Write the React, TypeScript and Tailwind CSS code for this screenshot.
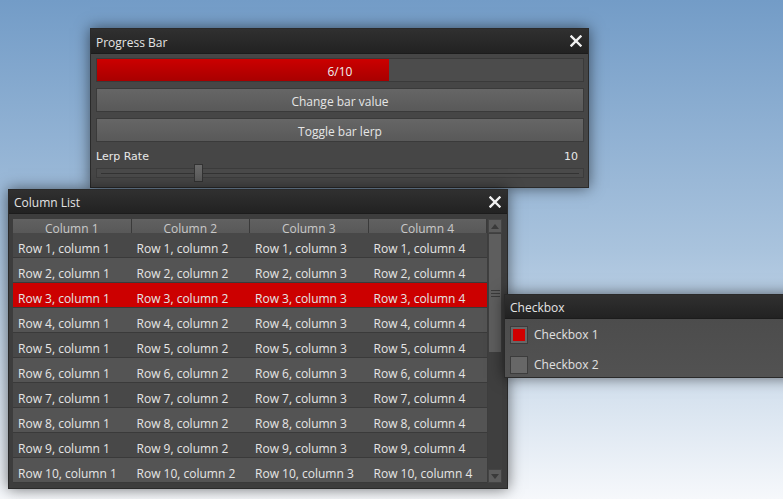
import React from "react";

const font = { fontFamily: '"Open Sans", "Noto Sans", sans-serif' };

function CloseX() {
  return (
    <svg width="12" height="12" viewBox="0 0 12 12" className="block">
      <path d="M1.5 1.5 L10.5 10.5 M10.5 1.5 L1.5 10.5" stroke="#f2f2f2" strokeWidth="2.4" strokeLinecap="square" />
    </svg>
  );
}

function TitleBar({ title, close, h }: { title: string; close?: boolean; h: string }) {
  return (
    <div className={`${h} flex items-center justify-between pl-[5px] pr-[6px] bg-gradient-to-b from-[#303030] to-[#222222] border-b border-[#1c1c1c]`}>
      <span className="text-[12px] text-[#e4e4e4] pt-[3px]">{title}</span>
      {close && <CloseX />}
    </div>
  );
}

function ProgressWindow() {
  return (
    <div className="absolute left-[90px] top-[28px] w-[499px] h-[160px] bg-[#464646] border border-[#2a2a2a] shadow-[0_0_14px_rgba(0,0,0,0.55)] flex flex-col">
      <TitleBar title="Progress Bar" close h="h-[25px]" />
      <div className="flex flex-col pl-[5px] pt-[4px] gap-[6px]">
        <div className="relative w-[488px] h-[24px] bg-[#4c4c4c] border border-[#3a3a3a]">
          <div className="h-full w-[60%] bg-gradient-to-b from-[#cc0000] to-[#a80000]" />
          <span className="absolute inset-0 pt-[3px] flex items-center justify-center text-[12px] text-[#f0f0f0]">6/10</span>
        </div>
        {["Change bar value", "Toggle bar lerp"].map((t) => (
          <div key={t} className="w-[488px] h-[24px] pt-[3px] flex items-center justify-center bg-gradient-to-b from-[#666666] to-[#595959] border border-[#3a3a3a] text-[12px] text-[#e6e6e6]">
            {t}
          </div>
        ))}
        <div className="w-[488px] h-[14px] pt-[2px] flex justify-between items-center pr-[6px] text-[11px] leading-none text-[#e8e8e8]" style={{ fontFamily: '"DejaVu Sans", sans-serif' }}>
          <span>Lerp Rate</span>
          <span>10</span>
        </div>
        <div className="relative w-[488px] h-[10px] bg-[#4a4a4a] border border-[#3c3c3c] flex items-center px-[4px]">
          <div className="h-px w-full bg-[#333333]" />
          <div className="absolute left-[97px] top-[-5px] w-[9px] h-[18px] bg-gradient-to-b from-[#6a6a6a] to-[#5a5a5a] border border-[#333333]" />
        </div>
      </div>
    </div>
  );
}

function ColumnListWindow() {
  const rows = Array.from({ length: 10 }, (_, i) => i + 1);
  return (
    <div className="absolute left-[8px] top-[189px] w-[500px] h-[300px] bg-[#3d3d3d] border border-[#2a2a2a] shadow-[0_0_14px_rgba(0,0,0,0.55)] flex flex-col">
      <TitleBar title="Column List" close h="h-[24px]" />
      <div className="flex pl-[4px] pt-[5px] gap-[1px]">
        <div className="w-[474px] flex flex-col">
          <div className="grid grid-cols-4 h-[14px]">
            {[1, 2, 3, 4].map((c) => (
              <div key={c} className="flex items-center justify-center pt-[4px] bg-gradient-to-b from-[#616161] to-[#575757] border-r border-b border-[#3a3a3a] text-[12px] leading-none text-[#c9c9c9]">
                Column {c}
              </div>
            ))}
          </div>
          {rows.map((r) => (
            <div
              key={r}
              className={`grid grid-cols-4 h-[25px] border-b border-[#3a3a3a] ${
                r === 3 ? "bg-[#cc0000]" : r % 2 === 1 ? "bg-[#484848]" : "bg-[#545454]"
              }`}
            >
              {[1, 2, 3, 4].map((c) => (
                <div key={c} className="flex items-center pl-[5px] pt-[7px] text-[12px] text-[#e6e6e6] whitespace-nowrap">
                  Row {r}, column {c}
                </div>
              ))}
            </div>
          ))}
        </div>
        <div className="w-[14px] h-[264px] flex flex-col bg-[#3f3f3f]">
          <div className="h-[14px] flex items-center justify-center bg-[#5c5c5c] border border-[#444]">
            <svg width="8" height="5" viewBox="0 0 8 5"><path d="M0 5 L4 0 L8 5 Z" fill="#3a3a3a" /></svg>
          </div>
          <div className="h-[118px] mt-[1px] mx-px bg-[#5e5e5e] flex flex-col items-center justify-center gap-[2px]">
            <div className="w-[9px] h-px bg-[#3a3a3a]" />
            <div className="w-[9px] h-px bg-[#3a3a3a]" />
            <div className="w-[9px] h-px bg-[#3a3a3a]" />
          </div>
          <div className="flex-1" />
          <div className="h-[14px] flex items-center justify-center bg-[#5c5c5c] border border-[#444]">
            <svg width="8" height="5" viewBox="0 0 8 5"><path d="M0 0 L4 5 L8 0 Z" fill="#3a3a3a" /></svg>
          </div>
        </div>
      </div>
    </div>
  );
}

function CheckboxWindow() {
  return (
    <div className="absolute left-[504px] top-[294px] w-[300px] h-[84px] bg-gradient-to-b from-[#4a4a4a] to-[#525252] border border-[#2a2a2a] shadow-[0_0_14px_rgba(0,0,0,0.55)] flex flex-col">
      <TitleBar title="Checkbox" h="h-[24px]" />
      <div className="flex flex-col pl-[5px] pt-[6px] gap-[11px]">
        {[true, false].map((on, i) => (
          <div key={i} className="flex items-center gap-[6px]">
            <div className="w-[18px] h-[18px] bg-[#676767] border border-[#3c3c3c] flex items-center justify-center">
              {on && <div className="w-[12px] h-[12px] bg-[#d00000]" />}
            </div>
            <span className="text-[12px] text-[#e0e0e0] pt-[1px]">Checkbox {i + 1}</span>
          </div>
        ))}
      </div>
    </div>
  );
}

export default function App() {
  return (
    <div className="relative w-[783px] h-[499px] overflow-hidden bg-gradient-to-b from-[#739cc7] via-[#a9c3dd] to-[#f6f8fb]" style={font}>
      <ProgressWindow />
      <ColumnListWindow />
      <CheckboxWindow />
    </div>
  );
}
